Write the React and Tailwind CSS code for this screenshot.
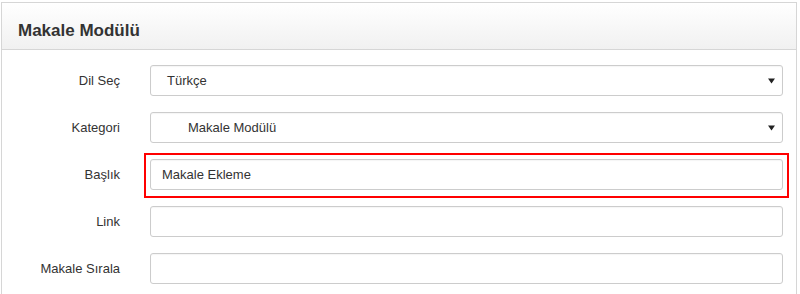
// Makale ekleme formu (admin paneli)

import React from "react";

const font = { fontFamily: '"Liberation Sans", Arial, sans-serif' };

function Arrow() {
    return (
        <svg width="7" height="6" viewBox="0 0 7 6" className="absolute right-[7px] top-1/2 -translate-y-1/2">
            <path d="M0 0.5h7L3.5 5.5z" fill="#222" />
        </svg>
    );
}

function Row({ label, children }) {
    return (
        <div className="flex items-center h-[31px]">
            <label className="w-[118px] shrink-0 text-right text-[13px] text-[#333]">{label}</label>
            <div className="ml-[30px] w-[633px] h-full relative">{children}</div>
        </div>
    );
}

function FakeSelect({ value, indent }) {
    return (
        <div className="h-full w-full border border-[#ccc] rounded-[3px] bg-white flex items-center relative shadow-[inset_0_1px_1px_rgba(0,0,0,0.04)]">
            <span className={`text-[13px] text-[#333] ${indent ? "pl-[37px]" : "pl-[16px]"}`}>{value}</span>
            <Arrow />
        </div>
    );
}

function TextInput({ value }) {
    return (
        <input
            type="text"
            readOnly
            defaultValue={value}
            className="h-full w-full border border-[#ccc] rounded-[3px] bg-white px-[11px] text-[13px] text-[#333] outline-none shadow-[inset_0_1px_1px_rgba(0,0,0,0.04)]"
            style={font}
        />
    );
}

export default function App() {
    return (
        <div className="w-[800px] h-[294px] bg-white overflow-hidden pt-[2px] pl-[1px]" style={font}>
            <div className="w-[796px] border border-[#d6d6d6] bg-white">
                <div className="h-[47px] box-border border-b border-[#d6d6d6] bg-gradient-to-b from-white to-[#f1f1f1] pt-[18px] px-[16px]">
                    <h2 className="text-[17px] leading-[20px] font-bold text-[#333]">Makale Modülü</h2>
                </div>

                <div className="flex flex-col gap-[16px] pt-[15px] pb-[20px]">
                    <Row label="Dil Seç">
                        <FakeSelect value="Türkçe" />
                    </Row>
                    <Row label="Kategori">
                        <FakeSelect value="Makale Modülü" indent />
                    </Row>
                    <Row label="Başlık">
                        <TextInput value="Makale Ekleme" />
                        <div className="absolute left-[-6px] right-[-6px] top-[-6px] bottom-[-8px] border-[2px] border-[#ff0000] pointer-events-none" />
                    </Row>
                    <Row label="Link">
                        <TextInput value="" />
                    </Row>
                    <Row label="Makale Sırala">
                        <TextInput value="" />
                    </Row>
                </div>
            </div>
        </div>
    );
}
